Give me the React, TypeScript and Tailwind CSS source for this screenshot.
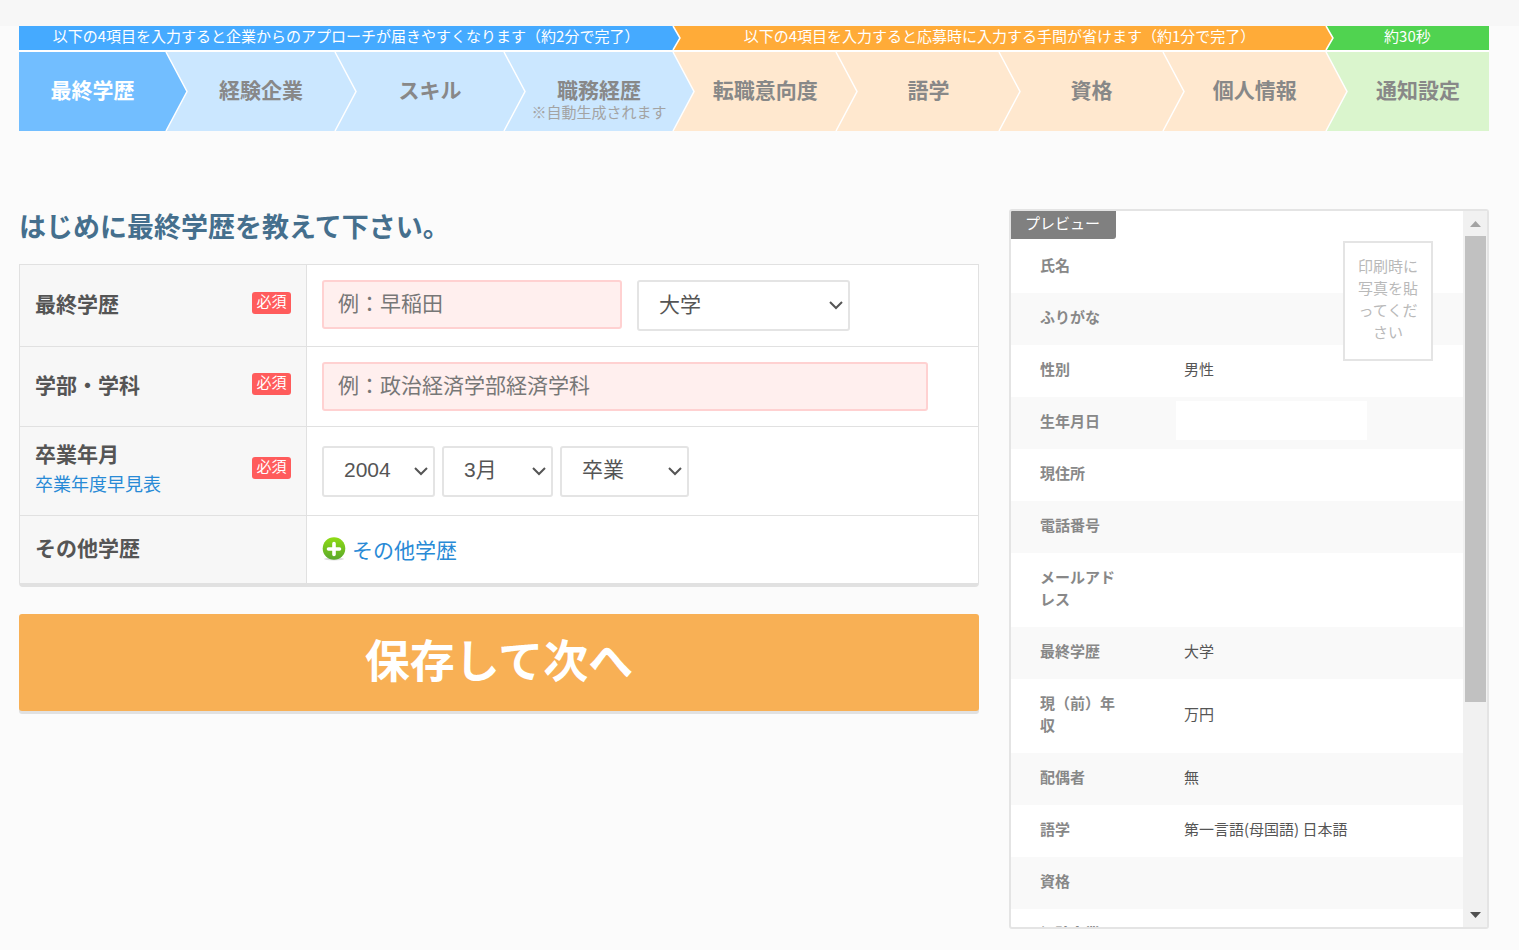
import { ReactNode } from "react";

type Option = { id: string; label: string; width: string; value: string; options: string[] };

const steps = [
  { label: "最終学歴", color: "bg-[#72beff] text-white", arrow: "#72beff" },
  { label: "経験企業", color: "bg-[#cbe7ff]", arrow: "#cbe7ff" },
  { label: "スキル", color: "bg-[#cbe7ff]", arrow: "#cbe7ff" },
  { label: "職務経歴", color: "bg-[#cbe7ff]", arrow: "#cbe7ff", note: "※自動生成されます" },
  { label: "転職意向度", color: "bg-[#ffe8cf]", arrow: "#ffe8cf" },
  { label: "語学", color: "bg-[#ffe8cf]", arrow: "#ffe8cf" },
  { label: "資格", color: "bg-[#ffe8cf]", arrow: "#ffe8cf" },
  { label: "個人情報", color: "bg-[#ffe8cf]", arrow: "#ffe8cf" },
  { label: "通知設定", color: "bg-[#daf5cd]" },
];

const previewRows = [
  { label: "氏名", value: "" },
  { label: "ふりがな", value: "" },
  { label: "性別", value: "男性" },
  { label: "生年月日", value: "", masked: true },
  { label: "現住所", value: "" },
  { label: "電話番号", value: "" },
  { label: "メールアドレス", value: "" },
  { label: "最終学歴", value: "大学" },
  { label: "現（前）年収", value: "万円" },
  { label: "配偶者", value: "無" },
  { label: "語学", value: "第一言語(母国語) 日本語" },
  { label: "資格", value: "" },
  { label: "経験企業", value: "" },
];

const graduation: Option[] = [
  { id: "year", label: "卒業年", width: "w-[113px]", value: "2004", options: ["2003", "2004", "2005"] },
  { id: "month", label: "卒業月", width: "w-[111px]", value: "3月", options: ["3月", "4月", "9月"] },
  { id: "status", label: "卒業区分", width: "w-[129px]", value: "卒業", options: ["卒業", "中退", "在学中"] },
];

const StepArrow = ({ width, height, fill }: { width: number; height: number; fill: string }) => (
  <svg
    className="absolute left-full top-0 z-10 overflow-visible"
    width={width}
    height={height}
    viewBox={`0 0 ${width} ${height}`}
    aria-hidden="true"
  >
    <path d={`M-1 0H0L${width} ${height / 2}L0 ${height}H-1Z`} fill={fill} />
    <path d={`M0 0L${width} ${height / 2}L0 ${height}`} fill="none" stroke="#fff" strokeWidth="1.5" />
  </svg>
);

const StepHeader = () => (
  <nav aria-label="入力ステップ" className="bg-white">
    <div className="grid grid-cols-[100fr_115fr_115fr_115fr_111fr_111fr_111fr_111fr_111fr] text-center text-[15px] leading-5 text-white">
      <p className="relative col-span-4 h-6 bg-[#45aaff]">
        以下の4項目を入力すると企業からのアプローチが届きやすくなります（約2分で完了）
        <StepArrow width={7} height={24} fill="#45aaff" />
      </p>
      <p className="relative col-span-4 h-6 bg-[#ffab38]">
        以下の4項目を入力すると応募時に入力する手間が省けます（約1分で完了）
        <StepArrow width={7} height={24} fill="#ffab38" />
      </p>
      <p className="h-6 bg-[#50d350]">約30秒</p>
    </div>
    <ol className="mt-[2px] grid grid-cols-[100fr_115fr_115fr_115fr_111fr_111fr_111fr_111fr_111fr] text-center text-[#888]">
      {steps.map((step, i) => (
        <li key={step.label} className={`relative h-[79px] pt-[22px] ${i > 0 ? "pl-[21px]" : ""} ${step.color}`}>
          <p className="text-[21px] font-bold leading-[30px]">{step.label}</p>
          {step.note && <p className="whitespace-nowrap text-[15px] leading-4 text-[#a3a3a3]">{step.note}</p>}
          {step.arrow && <StepArrow width={21} height={79} fill={step.arrow} />}
        </li>
      ))}
    </ol>
  </nav>
);

const SelectBox = ({ id, label, width, value, options }: Option) => (
  <div className={`relative ${width}`}>
    <select
      id={id}
      aria-label={label}
      defaultValue={value}
      className="h-[51px] w-full appearance-none rounded-[3px] border-2 border-[#e4e4e4] bg-white px-5 pb-[2px] font-['Liberation_Sans','Noto_Sans_CJK_JP',sans-serif] text-[21px] text-[#555]"
    >
      {options.map((option) => (
        <option key={option}>{option}</option>
      ))}
    </select>
    <svg
      className="pointer-events-none absolute right-[7px] top-[21px]"
      width="14"
      height="9"
      viewBox="0 0 14 9"
      fill="none"
      stroke="#555"
      strokeWidth="2"
      aria-hidden="true"
    >
      <path d="M1 1L7 7L13 1" />
    </svg>
  </div>
);

const FormRow = ({
  label,
  htmlFor,
  height,
  required,
  link,
  last,
  children,
}: {
  label: string;
  htmlFor?: string;
  height: string;
  required?: boolean;
  link?: string;
  last?: boolean;
  children: ReactNode;
}) => {
  const border = last ? "" : "border-b";
  return (
    <tr className={height}>
      <th scope="row" className={`w-[287px] border-r border-[#e1e1e1] bg-[#f7f7f7] px-[15px] pb-[6px] text-left ${border}`}>
        <div className="flex items-center justify-between">
          <div>
            <label htmlFor={htmlFor} className="block text-[21px] font-bold leading-[30px]">
              {label}
            </label>
            {link && (
              <a href="#" className="block text-[18px] font-normal leading-[30px] text-[#288ad6]">
                {link}
              </a>
            )}
          </div>
          {required && (
            <span className="h-[22px] w-[39px] rounded-[3px] bg-[#ff5c5c] text-center text-[15px] font-normal leading-[18px] text-white">
              必須
            </span>
          )}
        </div>
      </th>
      <td className={`border-[#e1e1e1] bg-white px-[15px] ${border}`}>{children}</td>
    </tr>
  );
};

const PlusIcon = () => (
  <svg width="24" height="24" viewBox="0 0 24 24" aria-hidden="true">
    <defs>
      <linearGradient id="plusGreen" x1="0" y1="0" x2="0" y2="1">
        <stop offset="0" stopColor="#8fdc14" />
        <stop offset="1" stopColor="#5aa72c" />
      </linearGradient>
    </defs>
    <ellipse cx="12" cy="22" rx="10" ry="1.5" fill="#ddd" />
    <circle cx="12" cy="11.5" r="11.3" fill="url(#plusGreen)" />
    <path d="M12 6.5V17.5M6.5 12H17.5" stroke="#fff" strokeWidth="3.6" strokeLinecap="round" />
  </svg>
);

const EducationForm = () => {
  const inputClass =
    "h-[49px] rounded-[3px] border-2 border-[#ffd1d1] bg-[#ffefee] px-[14px] pb-[5px] text-[21px] placeholder:text-[#777]";
  return (
    <form className="min-w-0 flex-1" onSubmit={(e) => e.preventDefault()}>
      <h1 className="mb-[21px] text-[27px] font-bold leading-[34px] text-[#456f8d]">はじめに最終学歴を教えて下さい。</h1>
      <table className="w-full table-fixed border-separate border-spacing-0 rounded-b-[4px] border border-b-4 border-[#e1e1e1]">
        <tbody>
          <FormRow label="最終学歴" htmlFor="school" height="h-[82px]" required>
            <div className="flex items-start gap-[15px]">
              <input id="school" className={`w-[300px] ${inputClass}`} placeholder="例：早稲田" />
              <SelectBox
                id="schoolType"
                label="学校種別"
                width="w-[213px]"
                value="大学"
                options={["大学院", "大学", "短期大学", "専門学校"]}
              />
            </div>
          </FormRow>
          <FormRow label="学部・学科" htmlFor="faculty" height="h-[80px]" required>
            <input id="faculty" className={`block w-[606px] max-w-full ${inputClass}`} placeholder="例：政治経済学部経済学科" />
          </FormRow>
          <FormRow label="卒業年月" htmlFor="year" height="h-[89px]" required link="卒業年度早見表">
            <div className="flex gap-[7px]">
              {graduation.map((item) => (
                <SelectBox key={item.id} {...item} />
              ))}
            </div>
          </FormRow>
          <FormRow label="その他学歴" height="h-[67px]" last>
            <a href="#" className="flex items-center gap-[6px] pb-[2px] text-[21px] leading-[30px] text-[#288ad6]">
              <PlusIcon />
              その他学歴
            </a>
          </FormRow>
        </tbody>
      </table>
      <button
        type="submit"
        className="mt-[27px] block h-[97px] w-full rounded-[3px] bg-[#f8b055] pb-2 text-[45px] font-bold text-white shadow-[0_3px_0_#e1e1e1]"
      >
        保存して次へ
      </button>
    </form>
  );
};

const Preview = () => (
  <aside className="flex h-[720px] w-[480px] shrink-0 overflow-hidden rounded-[3px] border-2 border-[#e4e4e4] bg-white text-[15px] leading-[22px]">
    <div className="relative flex-1 overflow-hidden">
      <h2 className="absolute left-0 top-0 h-7 w-[105px] rounded-br-[3px] bg-[#808080] pl-[14px] leading-6 text-white">
        プレビュー
      </h2>
      <table className="mt-[30px] w-full table-fixed border-separate border-spacing-0">
        <tbody>
          {previewRows.map((row) => (
            <tr key={row.label} className="h-[52px] even:bg-[#f9f9f9]">
              <th scope="row" className="w-[144px] px-[29px] pb-[17px] pt-[13px] text-left font-bold text-[#888]">
                {row.label}
              </th>
              {row.masked ? (
                <td className="pb-[6px] pl-[21px]">
                  <div className="h-[39px] w-[191px] bg-white" />
                </td>
              ) : (
                <td className="pb-1 pl-[29px]">{row.value}</td>
              )}
            </tr>
          ))}
        </tbody>
      </table>
      <div className="absolute right-[30px] top-[30px] h-[120px] w-[90px] border-2 border-[#e4e4e4] bg-white px-3 pt-3 text-center text-[#b9b9b9]">
        印刷時に写真を貼ってください
      </div>
    </div>
    <div className="flex w-6 flex-col items-center justify-between bg-[#f1f1f1]" aria-hidden="true">
      <svg className="h-[25px]" width="11" height="25" viewBox="0 0 11 25">
        <path d="M0 16L5.5 10L11 16Z" fill="#a3a3a3" />
      </svg>
      <div className="mb-auto h-[466px] w-[21px] bg-[#c1c1c1]" />
      <svg className="h-[25px]" width="11" height="25" viewBox="0 0 11 25">
        <path d="M0 10L5.5 16L11 10Z" fill="#505050" />
      </svg>
    </div>
  </aside>
);

const App = () => {
  return (
    <div className="min-h-screen bg-[#fbfbfb] font-['Noto_Sans_CJK_JP',sans-serif] text-[#555]">
      <div className="h-[26px] bg-[#f7f7f7]" />
      <div className="pb-[21px] pl-[19px] pr-[30px]">
        <StepHeader />
        <main className="mt-[78px] flex items-start gap-[30px]">
          <EducationForm />
          <Preview />
        </main>
      </div>
    </div>
  );
};

export default App;
